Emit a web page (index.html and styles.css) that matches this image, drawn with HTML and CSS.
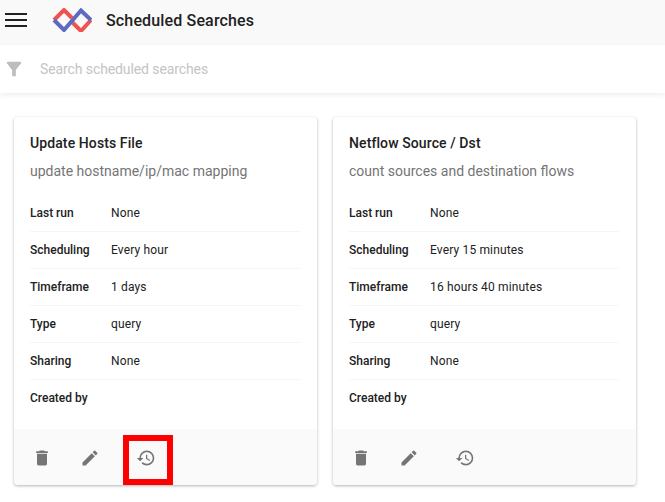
FILE: index.html
```html
<!DOCTYPE html>
<html lang="en">
<head>
<meta charset="utf-8">
<title>Scheduled Searches</title>
<link rel="stylesheet" href="styles.css">
</head>
<body>
<header class="topbar">
  <svg class="menu-icon" width="24" height="24" viewBox="0 0 24 24"><path d="M1 6h22M1 12h22M1 18h22" stroke="#212121" stroke-width="2" fill="none"/></svg>
  <svg class="logo" width="40" height="24" viewBox="0 0 40 24">
    <path d="M2 12 L12 2 L20 10" fill="none" stroke="#ef5350" stroke-width="4"/>
    <path d="M20 14 L29 23 L39 12" fill="none" stroke="#ef5350" stroke-width="4"/>
    <path d="M2 12 L12 22 L29 2.500 L39 12" fill="none" stroke="#5c6bc0" stroke-width="4"/>
  </svg>
  <h1 class="title">Scheduled Searches</h1>
</header>
<div class="searchbar">
  <svg class="filter-icon" width="22" height="22" viewBox="0 0 24 24"><path d="M4.250 5.610C6.270 8.200 10 13 10 13v6c0 .55.45 1 1 1h2c.55 0 1-.45 1-1v-6s3.720-4.800 5.740-7.390A.998.998 0 0 0 18.950 4H5.040c-.83 0-1.300.95-.79 1.610z" fill="#bdbdbd"/></svg>
  <span class="search-placeholder">Search scheduled searches</span>
</div>
<main class="cards">
  <article class="card">
    <div class="card-body">
      <h2 class="card-title">Update Hosts File</h2>
      <p class="card-sub">update hostname/ip/mac mapping</p>
      <dl class="props">
        <div class="prop"><dt>Last run</dt><dd>None</dd></div>
        <div class="prop"><dt>Scheduling</dt><dd>Every hour</dd></div>
        <div class="prop"><dt>Timeframe</dt><dd>1 days</dd></div>
        <div class="prop"><dt>Type</dt><dd>query</dd></div>
        <div class="prop"><dt>Sharing</dt><dd>None</dd></div>
        <div class="prop"><dt>Created by</dt><dd></dd></div>
      </dl>
    </div>
    <footer class="card-actions">
      <svg class="action" width="20" height="20" viewBox="0 0 24 24"><path d="M6 19c0 1.100.9 2 2 2h8c1.100 0 2-.9 2-2V7H6v12zM19 4h-3.500l-1-1h-5l-1 1H5v2h14V4z"/></svg>
      <svg class="action" width="20" height="20" viewBox="0 0 24 24"><path d="M3 17.250V21h3.750L17.810 9.940l-3.750-3.750L3 17.250zM20.710 7.040a1 1 0 0 0 0-1.410l-2.340-2.340a1 1 0 0 0-1.410 0l-1.830 1.830 3.750 3.750 1.830-1.830z"/></svg>
      <span class="action-wide"><svg class="action" width="20" height="20" viewBox="0 0 24 24"><path d="M13 3a9 9 0 0 0-9 9H1l3.890 3.890.07.140L9 12H6c0-3.870 3.130-7 7-7s7 3.130 7 7-3.130 7-7 7c-1.930 0-3.680-.79-4.940-2.060l-1.420 1.420A8.954 8.954 0 0 0 13 21a9 9 0 0 0 0-18zm-1 5v5l4.280 2.540.72-1.210-3.500-2.080V8H12z"/></svg></span>
      <span class="highlight"></span>
    </footer>
  </article>
  <article class="card">
    <div class="card-body">
      <h2 class="card-title">Netflow Source / Dst</h2>
      <p class="card-sub">count sources and destination flows</p>
      <dl class="props">
        <div class="prop"><dt>Last run</dt><dd>None</dd></div>
        <div class="prop"><dt>Scheduling</dt><dd>Every 15 minutes</dd></div>
        <div class="prop"><dt>Timeframe</dt><dd>16 hours 40 minutes</dd></div>
        <div class="prop"><dt>Type</dt><dd>query</dd></div>
        <div class="prop"><dt>Sharing</dt><dd>None</dd></div>
        <div class="prop"><dt>Created by</dt><dd></dd></div>
      </dl>
    </div>
    <footer class="card-actions">
      <svg class="action" width="20" height="20" viewBox="0 0 24 24"><path d="M6 19c0 1.100.9 2 2 2h8c1.100 0 2-.9 2-2V7H6v12zM19 4h-3.500l-1-1h-5l-1 1H5v2h14V4z"/></svg>
      <svg class="action" width="20" height="20" viewBox="0 0 24 24"><path d="M3 17.250V21h3.750L17.810 9.940l-3.750-3.750L3 17.250zM20.710 7.040a1 1 0 0 0 0-1.410l-2.340-2.340a1 1 0 0 0-1.410 0l-1.830 1.830 3.750 3.750 1.830-1.830z"/></svg>
      <span class="action-wide"><svg class="action" width="20" height="20" viewBox="0 0 24 24"><path d="M13 3a9 9 0 0 0-9 9H1l3.890 3.890.07.140L9 12H6c0-3.870 3.130-7 7-7s7 3.130 7 7-3.130 7-7 7c-1.930 0-3.680-.79-4.940-2.060l-1.420 1.420A8.954 8.954 0 0 0 13 21a9 9 0 0 0 0-18zm-1 5v5l4.280 2.540.72-1.210-3.500-2.080V8H12z"/></svg></span>
    </footer>
  </article>
</main>
</body>
</html>
```
FILE: styles.css
```css
* { box-sizing: border-box; }
html, body { margin: 0; padding: 0; height: 100%; overflow: hidden; }
body { background: #fff; font-family: Roboto, "Liberation Sans", sans-serif; color: #212121; }
.topbar { display: flex; align-items: center; height: 45px; background: #f9f9f9; padding: 0 0 5px 4px; }
.menu-icon { flex: none; }
.logo { flex: none; margin-left: 24px; }
.title { margin: 0 0 0 14px; font-size: 16px; font-weight: 500; letter-spacing: .15px; }
.searchbar { display: flex; align-items: center; height: 48px; background: #fff; box-shadow: 0 2px 5px rgba(0,0,0,.07); position: relative; padding-left: 3px; }
.filter-icon { flex: none; }
.search-placeholder { margin-left: 15px; font-size: 14px; color: #c4c4c4; letter-spacing: -.1px; }
.cards { display: flex; gap: 16px; padding: 24px 0 0 14px; }
.card { width: 303px; height: 368px; display: flex; flex-direction: column; background: #fff; border-radius: 4px; box-shadow: 0 1px 3px rgba(0,0,0,.3); }
.card-body { flex: 1; padding: 16px 17px 0 16px; }
.card-title { margin: 0; font-size: 14px; line-height: 20px; font-weight: 500; letter-spacing: .1px; }
.card-sub { margin: 8px 0 0; font-size: 14px; line-height: 20px; color: #757575; }
.props { margin: 14px 0 0; }
.prop { display: flex; align-items: center; height: 37px; border-bottom: 1px solid #f5f5f5; font-size: 12px; }
.prop:last-child { border-bottom-color: transparent; }
.prop dt { width: 81px; font-weight: 500; }
.prop dd { margin: 0; letter-spacing: .15px; }
.card-actions { position: relative; flex: none; height: 56px; display: flex; align-items: center; gap: 28px; padding: 1px 0 0 18px; background: #fafafa; border-radius: 0 0 4px 4px; }
.action { display: block; fill: #757575; }
.action-wide { margin-left: 8px; }
.highlight { position: absolute; left: 109px; top: 6px; width: 50px; height: 50px; border: 6px solid #f00; }
```
